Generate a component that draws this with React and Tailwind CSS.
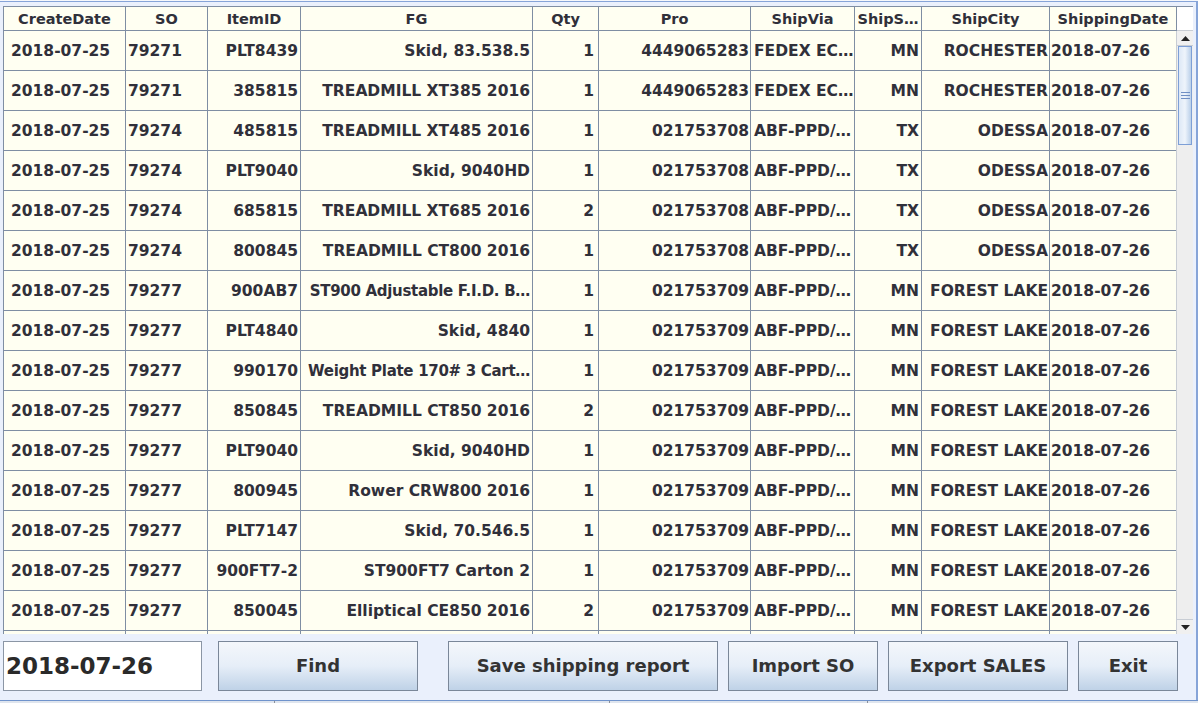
import React from "react";

const cols = [
  { key: "cd", title: "CreateDate", w: "w-[122px]", align: "text-left pl-[7px]" },
  { key: "so", title: "SO", w: "w-[82px]", align: "text-left pl-[2px]" },
  { key: "item", title: "ItemID", w: "w-[93px]", align: "text-right pr-[2px]" },
  { key: "fg", title: "FG", w: "w-[232px]", align: "text-right pr-[2px]" },
  { key: "qty", title: "Qty", w: "w-[66px]", align: "text-right pr-[4px]" },
  { key: "pro", title: "Pro", w: "w-[152px]", align: "text-right pr-[1px]" },
  { key: "via", title: "ShipVia", w: "w-[104px]", align: "text-left pl-[3px]" },
  { key: "st", title: "ShipS…", w: "w-[67px]", align: "text-right pr-[2px]" },
  { key: "city", title: "ShipCity", w: "w-[128px]", align: "text-right pr-[1px]" },
  { key: "sd", title: "ShippingDate", w: "w-[127px]", align: "text-left pl-[1px]" },
];

const mk = (so, item, fg, qty, pro, via, st, city) => ({
  cd: "2018-07-25",
  so,
  item,
  fg,
  qty,
  pro,
  via,
  st,
  city,
  sd: "2018-07-26",
});

const rows = [
  mk("79271", "PLT8439", "Skid, 83.538.5", "1", "4449065283", "FEDEX EC…", "MN", "ROCHESTER"),
  mk("79271", "385815", "TREADMILL XT385 2016", "1", "4449065283", "FEDEX EC…", "MN", "ROCHESTER"),
  mk("79274", "485815", "TREADMILL XT485 2016", "1", "021753708", "ABF-PPD/…", "TX", "ODESSA"),
  mk("79274", "PLT9040", "Skid, 9040HD", "1", "021753708", "ABF-PPD/…", "TX", "ODESSA"),
  mk("79274", "685815", "TREADMILL XT685 2016", "2", "021753708", "ABF-PPD/…", "TX", "ODESSA"),
  mk("79274", "800845", "TREADMILL CT800 2016", "1", "021753708", "ABF-PPD/…", "TX", "ODESSA"),
  mk("79277", "900AB7", "ST900 Adjustable F.I.D. B…", "1", "021753709", "ABF-PPD/…", "MN", "FOREST LAKE"),
  mk("79277", "PLT4840", "Skid, 4840", "1", "021753709", "ABF-PPD/…", "MN", "FOREST LAKE"),
  mk("79277", "990170", "Weight Plate 170# 3 Cart…", "1", "021753709", "ABF-PPD/…", "MN", "FOREST LAKE"),
  mk("79277", "850845", "TREADMILL CT850 2016", "2", "021753709", "ABF-PPD/…", "MN", "FOREST LAKE"),
  mk("79277", "PLT9040", "Skid, 9040HD", "1", "021753709", "ABF-PPD/…", "MN", "FOREST LAKE"),
  mk("79277", "800945", "Rower CRW800 2016", "1", "021753709", "ABF-PPD/…", "MN", "FOREST LAKE"),
  mk("79277", "PLT7147", "Skid, 70.546.5", "1", "021753709", "ABF-PPD/…", "MN", "FOREST LAKE"),
  mk("79277", "900FT7-2", "ST900FT7 Carton 2", "1", "021753709", "ABF-PPD/…", "MN", "FOREST LAKE"),
  mk("79277", "850045", "Elliptical CE850 2016", "2", "021753709", "ABF-PPD/…", "MN", "FOREST LAKE"),
  // next row is only peeking in at the bottom edge
  { cd: "", so: "", item: "", fg: "", qty: "", pro: "", via: "", st: "", city: "", sd: "" },
];

const Btn = ({ children, className }) => (
  <button
    className={`h-[50px] border border-[#7a8799] bg-gradient-to-b from-[#f4f7fb] via-[#e6eef8] to-[#bfd2e7] text-[18px] leading-none font-bold text-[#333333] ${className}`}
  >
    {children}
  </button>
);

const Scrollbar = () => (
  <div className="w-[17px] h-full flex flex-col bg-[#eeeeee] border-l border-[#c8cdd4]">
    <div className="h-[15px] flex items-center justify-center bg-[#f0f0f0] border-b border-[#c8cdd4]">
      <svg width="9" height="5" viewBox="0 0 9 5">
        <path d="M0 5 L4.5 0 L9 5 Z" fill="#222" />
      </svg>
    </div>
    <div className="h-[99px] mx-[1px] border border-[#7d9fd6] bg-gradient-to-r from-[#dde8f6] via-[#eef4fb] to-[#b9cfe9] flex items-center justify-center">
      <div className="flex flex-col gap-[2px]">
        <div className="w-[9px] h-[1px] bg-[#6f8fc4]" />
        <div className="w-[9px] h-[1px] bg-[#6f8fc4]" />
        <div className="w-[9px] h-[1px] bg-[#6f8fc4]" />
      </div>
    </div>
    <div className="flex-1" />
    <div className="h-[15px] flex items-center justify-center bg-[#f0f0f0] border-t border-[#c8cdd4]">
      <svg width="9" height="5" viewBox="0 0 9 5">
        <path d="M0 0 L9 0 L4.5 5 Z" fill="#222" />
      </svg>
    </div>
  </div>
);

export default function App() {
  return (
    <div
      className="w-[1198px] h-[703px] overflow-hidden bg-[#eaf0fc] flex flex-col text-[#30303a]"
      style={{ fontFamily: '"DejaVu Sans", Verdana, sans-serif' }}
    >
      {/* top edge */}
      <div className="h-[1px] bg-[#f6f8fb]" />
      <div className="h-[1px] bg-[#86a4d8]" />

      <div className="flex-1 flex flex-col pl-[3px] pr-[2px] pt-[4px] border-r-2 border-[#86a4d8] min-h-0">
        {/* table */}
        <div className="w-[1190px] h-[628px] flex flex-col border-l border-t border-[#7f8ea3] bg-[#fffff2]">
          <div className="flex h-[24px] shrink-0">
            {cols.map((c) => (
              <div
                key={c.key}
                className={`${c.w} shrink-0 border-r border-b border-[#7f8ea3] flex items-center justify-center pt-[2px] text-[14.5px] font-bold whitespace-nowrap overflow-hidden`}
              >
                {c.title}
              </div>
            ))}
            <div className="flex-1 bg-white border-b border-[#c8cdd4]" />
          </div>
          <div className="flex flex-1 min-h-0">
            <div className="w-[1173px] overflow-hidden">
              {rows.map((r, i) => (
                <div key={i} className="flex h-[40px]">
                  {cols.map((c) => {
                    const long = c.key === "fg" && r.fg.length > 22;
                    return (
                      <div
                        key={c.key}
                        className={`${c.w} shrink-0 border-r border-b border-[#7f8ea3] pt-[1px] leading-[38px] font-bold whitespace-nowrap overflow-hidden ${c.align} ${
                          long ? "text-[15px] tracking-[-0.3px]" : "text-[15.5px]"
                        }`}
                      >
                        {r[c.key]}
                      </div>
                    );
                  })}
                </div>
              ))}
            </div>
            <Scrollbar />
          </div>
        </div>

        {/* controls */}
        <div className="flex items-start pt-[7px]">
          <div className="w-[199px] h-[50px] bg-white border border-[#8b96a5] flex items-center pl-[2px] text-[23px] leading-none font-bold text-[#2a2a2a]">
            2018-07-26
          </div>
          <Btn className="w-[200px] ml-[16px]">Find</Btn>
          <Btn className="w-[270px] ml-[30px]">Save shipping report</Btn>
          <Btn className="w-[150px] ml-[10px]">Import SO</Btn>
          <Btn className="w-[180px] ml-[10px]">Export SALES</Btn>
          <Btn className="w-[100px] ml-[10px]">Exit</Btn>
        </div>
      </div>

      {/* bottom edge */}
      <div className="h-[1px] bg-[#6f93cc]" />
      <div className="h-[2px] flex bg-[#dfe5ee]">
        <div className="w-[275px] border-r border-[#8a8f98]" />
        <div className="w-[335px] border-r border-[#8a8f98]" />
        <div className="w-[258px] border-r border-[#8a8f98]" />
      </div>
    </div>
  );
}
